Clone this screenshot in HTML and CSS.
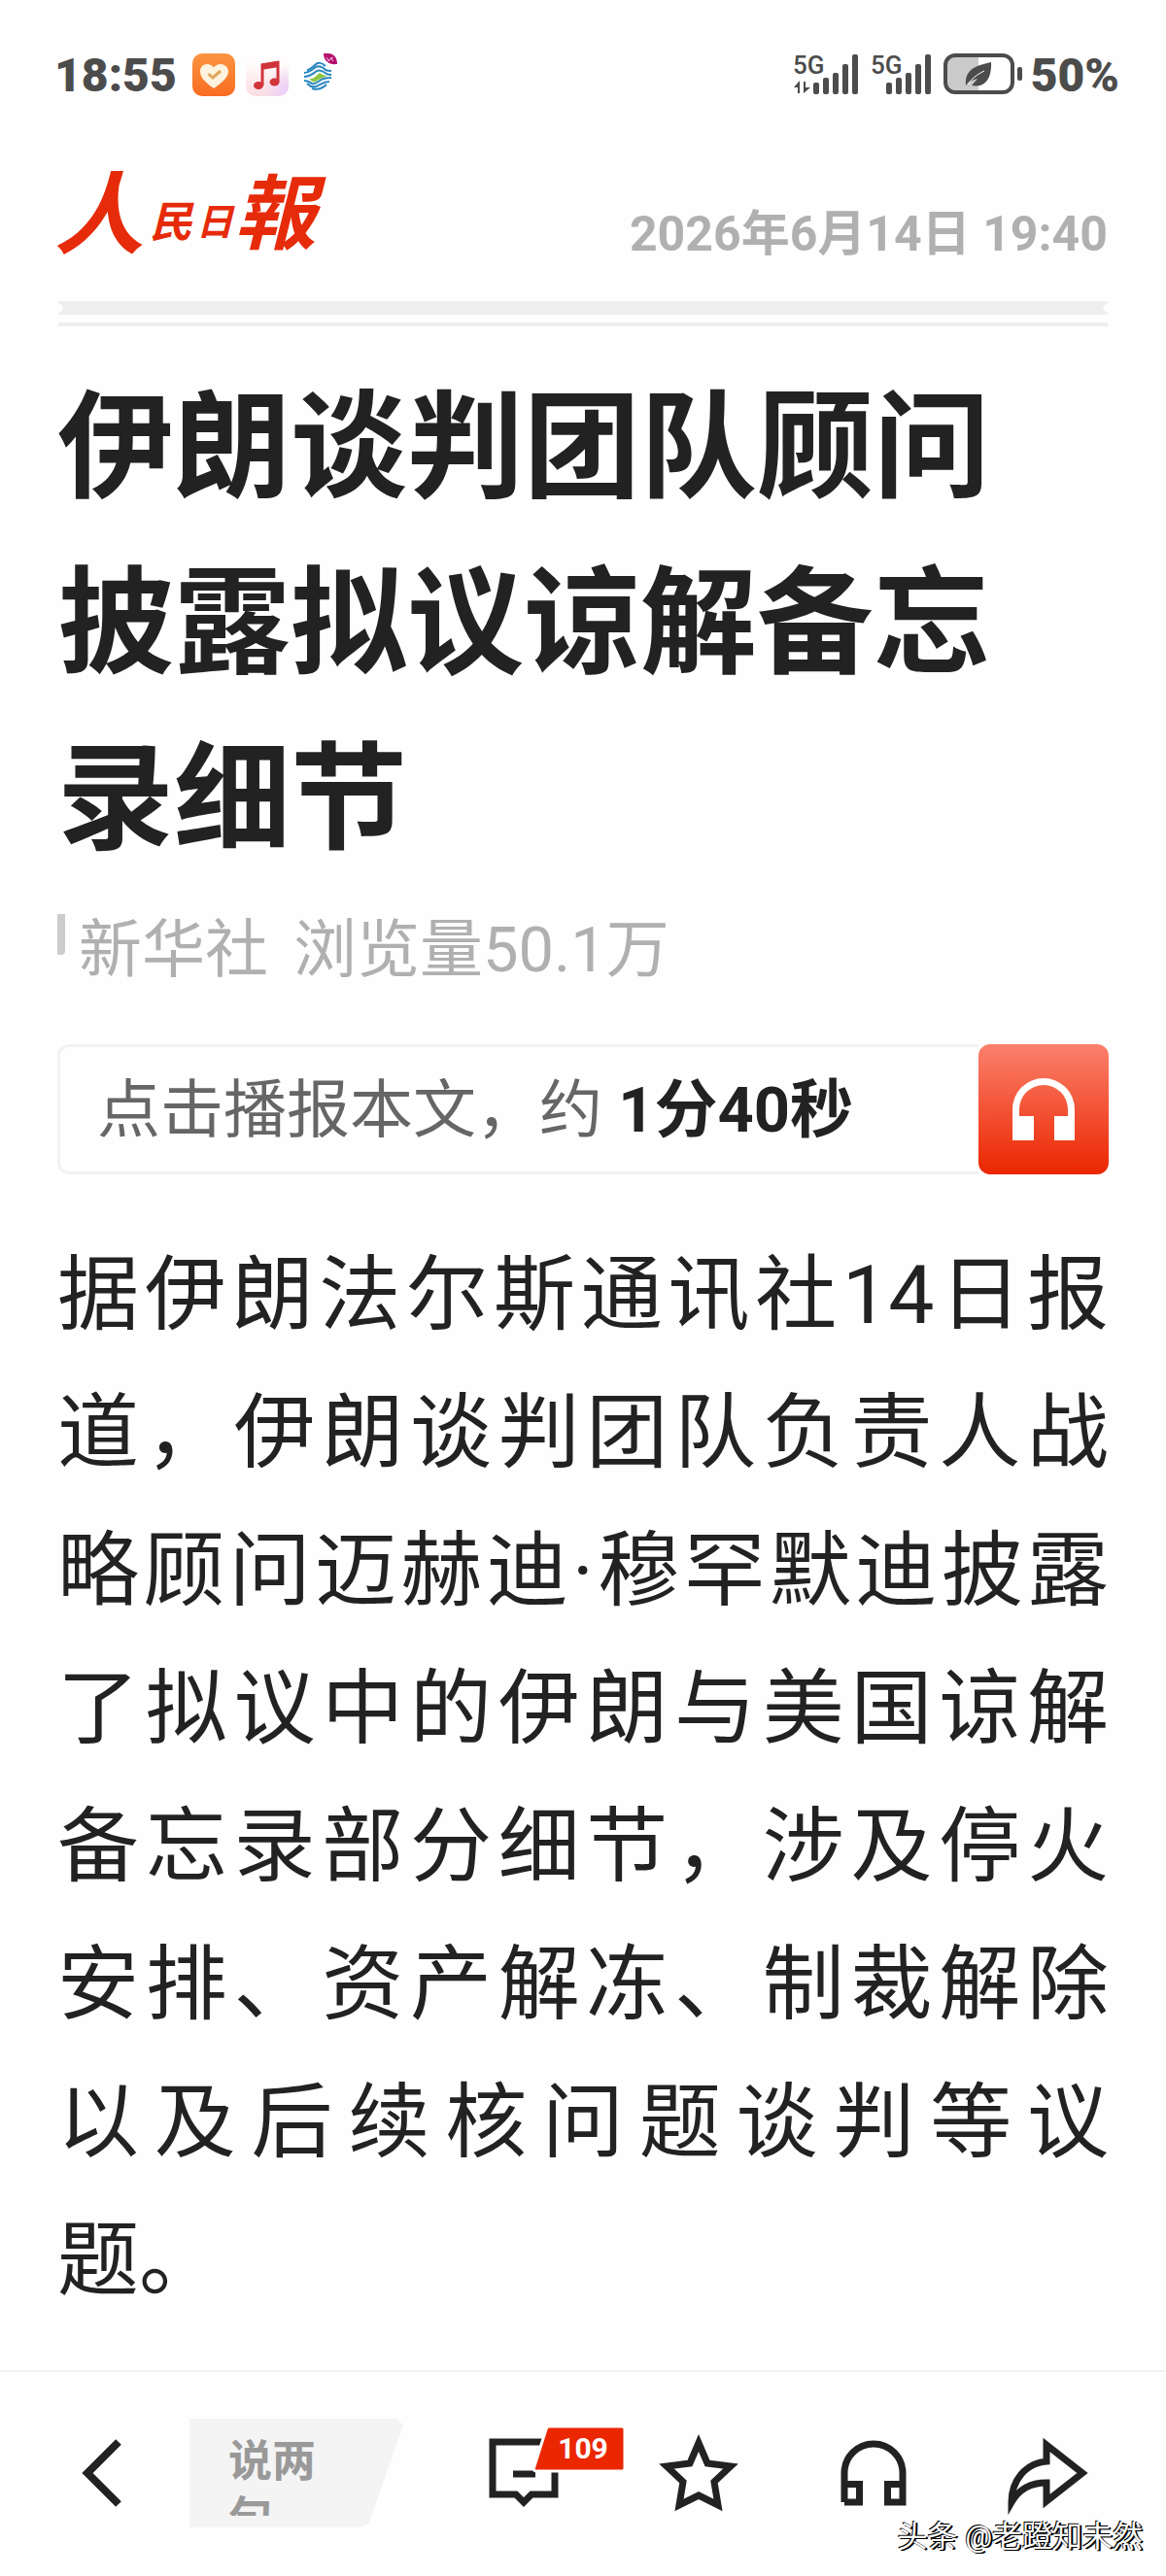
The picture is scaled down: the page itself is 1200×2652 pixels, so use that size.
FILE: index.html
```html
<!DOCTYPE html>
<html lang="zh-CN">
<head>
	<meta charset="utf-8">
	<meta name="viewport" content="width=device-width, initial-scale=1">
	<title>伊朗谈判团队顾问披露拟议谅解备忘录细节</title>
	<link rel="stylesheet" href="styles.css">
</head>
<body>
	<div class="status">
		<span class="time">18:55</span>
		<div class="apps">
			<svg width="44" height="44" viewBox="0 0 44 44">
				<defs>
					<linearGradient id="orange" x1="0" y1="0" x2="0" y2="1">
						<stop offset="0" stop-color="#fb9540"/>
						<stop offset="1" stop-color="#f96c22"/>
					</linearGradient>
				</defs>
				<rect width="44" height="44" rx="10" fill="url(#orange)"/>
				<path d="M22 36C12 29 8 24 8 18.500C8 14 11 11 15 11C18 11 20.500 12.500 22 14.500C23.500 12.500 26 11 29 11C33 11 37 14 37 18.500C37 24 32 29 22 36Z" fill="#fdf3e0"/>
				<path d="M16.500 21L21 25L29 18" fill="none" stroke="#e0a55c" stroke-width="3"/>
			</svg>
			<svg width="44" height="44" viewBox="0 0 44 44">
				<defs>
					<linearGradient id="pink" x1="0" y1="0" x2="0" y2="1">
						<stop offset="0.200" stop-color="#fffdfd"/>
						<stop offset="1" stop-color="#fbdce2"/>
					</linearGradient>
					<radialGradient id="lilac" cx="1" cy="0.900" r="0.600">
						<stop offset="0" stop-color="#e9cdfa"/>
						<stop offset="1" stop-color="#e9cdfa" stop-opacity="0"/>
					</radialGradient>
				</defs>
				<rect width="44" height="44" rx="10" fill="url(#pink)"/>
				<rect width="44" height="44" rx="10" fill="url(#lilac)"/>
				<path d="M17 33V12L33 9.500V29" fill="none" stroke="#d0343a" stroke-width="3"/>
				<path d="M16 10.500L34 7.500V14L16 17Z" fill="#d0343a"/>
				<ellipse cx="13" cy="33" rx="5" ry="4" fill="#d0343a"/>
				<ellipse cx="29.500" cy="29.500" rx="5" ry="4" fill="#d0343a"/>
			</svg>
			<svg width="44" height="44" viewBox="0 0 44 44">
				<g fill="none" stroke="#2a86c0" stroke-width="2">
					<path d="M8 17C11 17 13 15 16 12C19 9 23 9 27 13"/>
					<path d="M5 20C10 20 13 17 17 14C21 12 24 14 27 17C29 18 31 18 33 18"/>
					<path d="M5 24C11 24 14 21 18 18C22 16 25 19 28 21C30 22 31 22 33 22"/>
					<path d="M5 28C9 28 11 30 13 31C16 32 18 30 21 28C25 25 28 25 33 25"/>
					<path d="M8 31C11 34 14 35 17 34C21 33 24 29 31 29"/>
					<path d="M13 36C19 38 24 36 28 32"/>
				</g>
				<path d="M10 26C15 27 17 23 21 20C24 22 26 23 29 23C24 25 21 26 17 29C14 30 12 28 10 26Z" fill="#8cc63f"/>
				<path d="M25 0H30C36 0 39 5 39 11C31 12 25 8 25 0Z" fill="#b5116e"/>
				<path d="M28 4L31 8M32 4L35 8M29 8L35 4" stroke="#f3c3dd" stroke-width="1"/>
			</svg>
		</div>
		<div class="signals">
			<svg width="68" height="44" viewBox="0 0 68 44">
				<text class="net" x="-1" y="21">5G</text>
				<path d="M0 35L6 28V41H4V35ZM10 29V41L17 35H12V29Z" fill="#4c4c4c"/>
				<g fill="#4c4c4c">
					<rect x="20" y="30" width="6" height="12" rx="2"/>
					<rect x="30" y="25" width="6" height="17" rx="2"/>
					<rect x="40" y="20" width="6" height="22" rx="2"/>
					<rect x="50" y="11" width="6" height="31" rx="2"/>
					<rect x="60" y="1" width="6" height="41" rx="2"/>
				</g>
			</svg>
			<svg width="62" height="44" viewBox="0 0 62 44">
				<text class="net" x="-1" y="21">5G</text>
				<g fill="#4c4c4c">
					<rect x="15" y="30" width="6" height="12" rx="2"/>
					<rect x="25" y="25" width="6" height="17" rx="2"/>
					<rect x="35" y="20" width="6" height="22" rx="2"/>
					<rect x="45" y="11" width="6" height="31" rx="2"/>
					<rect x="55" y="1" width="6" height="41" rx="2"/>
				</g>
			</svg>
			<svg width="82" height="44" viewBox="0 0 82 44">
				<path d="M13 3H36V39H13Q3 39 3 30V12Q3 3 13 3Z" fill="#cacaca"/>
				<rect x="2" y="2" width="69" height="38" rx="10" fill="none" stroke="#4c4c4c" stroke-width="4"/>
				<rect x="76" y="14" width="5" height="14" rx="2" fill="#4c4c4c"/>
				<path d="M23 33C22 18 30 13 49 9C50 25 43 36 29 33L35 26C30 27 26 29 23 33Z" fill="#4c4c4c"/>
				<path d="M25 32C29 26 34 22 42 18" fill="none" stroke="#fff" stroke-width="1"/>
			</svg>
		</div>
		<span class="percent">50%</span>
	</div>

	<header class="masthead">
		<svg class="logo" width="270" height="108" viewBox="0 0 270 108" role="img" aria-label="人民日報">
			<text x="-4" y="92" font-size="92">人</text>
			<text x="94" y="82" font-size="44">民</text>
			<text x="142" y="80" font-size="38">日</text>
			<text x="181" y="88" font-size="84">報</text>
		</svg>
		<time class="date" datetime="2026-06-14T19:40">2026年6月14日 19:40</time>
	</header>
	<div class="rule"></div>

	<main class="article">
		<h1>伊朗谈判团队顾问披露拟议谅解备忘录细节</h1>
		<div class="meta">
			<span>新华社</span>
			<span>浏览量50.1万</span>
		</div>
		<div class="listen">
			<div class="listen-text">点击播报本文，约 <strong>1分40秒</strong></div>
			<button class="play" aria-label="播报">
				<svg width="66" height="66" viewBox="0 0 66 66">
					<path d="M1 65V33A32 32 0 0 1 65 33V65H44V40H58V33A25 25 0 0 0 8 33V40H23V65Z" fill="#fff"/>
				</svg>
			</button>
		</div>
		<p class="text">据伊朗法尔斯通讯社14日报道，伊朗谈判团队负责人战略顾问迈赫迪·穆罕默迪披露了拟议中的伊朗与美国谅解备忘录部分细节，涉及停火安排、资产解冻、制裁解除以及后续核问题谈判等议题。</p>
	</main>

	<nav class="toolbar">
		<button aria-label="返回">
			<svg width="44" height="72" viewBox="0 0 44 72">
				<path d="M39 4L7 36L39 68" fill="none" stroke="#222" stroke-width="8"/>
			</svg>
		</button>
		<button class="say"><span>说两句</span></button>
		<button class="comments" aria-label="评论">
			<svg width="72" height="72" viewBox="0 0 72 72">
				<path d="M4 4H68V58H44L36 66L28 58H4Z" fill="none" stroke="#222" stroke-width="7"/>
				<path d="M25 37H48" stroke="#222" stroke-width="7"/>
			</svg>
			<span class="count">
				<svg width="98" height="50" viewBox="0 0 98 50">
					<path d="M18 2H93Q96 2 96 5V45Q96 48 93 48H5Q1 48 3 43L15 5Q16 2 18 2Z" fill="#ea2700" stroke="#fff" stroke-width="3"/>
				</svg>
				<b>109</b>
			</span>
		</button>
		<button aria-label="收藏">
			<svg width="84" height="80" viewBox="0 0 84 80">
				<path d="M42 9L51 30L75 33L58 49L62 73L42 63L22 73L26 49L9 33L33 30Z" fill="none" stroke="#222" stroke-width="7"/>
			</svg>
		</button>
		<button aria-label="听新闻">
			<svg width="68" height="68" viewBox="0 0 68 68">
				<path d="M4 64V34A30 30 0 0 1 64 34V64H48.500V45.500H64M4 45.500H19.500V64H4" fill="none" stroke="#222" stroke-width="7"/>
			</svg>
		</button>
		<button aria-label="分享">
			<svg width="84" height="76" viewBox="0 0 84 76">
				<path d="M40 9L77 38L40 67V48C24 48 12 54 4 68C4 46 18 28 40 26Z" fill="none" stroke="#222" stroke-width="7"/>
			</svg>
		</button>
		<span class="watermark">头条 @老蹬知未然</span>
	</nav>
</body>
</html>
```

FILE: styles.css
```css
* {
	box-sizing: border-box;
}
body {
	margin: 0;
	min-height: 100vh;

	display: flex;
	flex-direction: column;

	font-family: Roboto, "Noto Sans CJK SC", sans-serif;
	background-color: #fefefe;
	color: #222;
}
button {
	padding: 0;
	border: 0;
	background: none;
	font-family: inherit;
	color: inherit;
}
svg {
	display: block;
	overflow: visible;
}

/* phone status bar */
.status {
	display: flex;
	align-items: center;

	height: 154px;
	padding: 0 48px 0 56px;

	font-size: 48px;
	font-weight: 900;
	color: #4c4c4c;
}
.apps {
	display: flex;
	gap: 11px;
	margin-left: 16px;
}
.signals {
	display: flex;
	gap: 12px;
	margin-left: auto;
	margin-right: 8px;
}
.net {
	font-size: 26px;
	font-weight: 500;
	fill: #4c4c4c;
}

.masthead {
	display: flex;
	justify-content: space-between;

	padding: 8px 60px 0;
}
.logo {
	font-family: "Noto Sans CJK TC", sans-serif;
	font-weight: 700;
	font-style: italic;
	fill: #e62b0a;
}
.date {
	padding-top: 51px;

	font-size: 50px;
	line-height: 56px;
	font-weight: 700;
	color: #b0b0b0;
}

/* thick line over a thin one */
.rule {
	height: 26px;
	margin: 40px 60px 0;

	border-bottom: 4px solid #eee;
	background:
		radial-gradient(circle at 100% 7px, #fefefe 4px, transparent 5px),
		radial-gradient(circle at 0 7px, #fefefe 4px, transparent 5px),
		linear-gradient(#eee 14px, transparent 14px);
}

.article {
	padding: 36px 59px 0;
}
h1 {
	max-width: 1000px;
	margin: 0;

	font-size: 120px;
	line-height: 181px;
	font-weight: 700;
}
.meta {
	display: flex;
	gap: 26px;

	margin-top: 24px;
	padding-left: 22px;
	position: relative;

	font-size: 65px;
	line-height: 78px;
	color: #b0b0b0;
}
.meta::before {
	content: "";
	position: absolute;
	left: 0;
	top: 2px;

	width: 8px;
	height: 42px;
	border-radius: 0 0 4px 0;
	background-color: #ccc;
}
.listen {
	display: flex;
	justify-content: space-between;

	margin-top: 58px;
}
.listen-text {
	flex: 1;
	padding: 2px 0 0 38px;

	border: 3px solid #f2f2f2;
	border-right: 0;
	border-radius: 12px 0 0 12px;

	font-size: 65px;
	line-height: 126px;
	color: #666;
}
.listen-text strong {
	color: #222;
}
.play {
	display: flex;
	align-items: center;
	justify-content: center;

	width: 134px;
	height: 134px;

	border-radius: 12px;
	background: linear-gradient(#fb806c, #eb2600);
}
.text {
	margin: 54px 0 0;

	font-size: 84px;
	line-height: 142px;
	text-align: justify;
}

/* bottom toolbar */
.toolbar {
	display: grid;
	grid-template-columns: 180px 254px repeat(4, 1fr);
	align-items: start;

	position: relative;
	height: 212px;
	margin-top: auto;
	padding: 48px 31px 0 15px;

	border-top: 2px solid #f2f2f2;
}
.toolbar button {
	display: flex;
	align-items: center;
	justify-content: center;

	height: 112px;
}
.toolbar .say {
	align-items: flex-start;
	justify-content: flex-start;

	width: 220px;
	padding: 16px 40px 8px;

	background-color: #f4f4f4;
	clip-path: polygon(0 0, 97% 0, 100% 6%, 84% 96%, 80% 100%, 0 100%);

	font-size: 45px;
	line-height: 58px;
	font-weight: 700;
	text-align: left;
	color: #999;
}
.say span {
	width: 100px;
	height: 84px;
	overflow: hidden;
}
.comments {
	position: relative;
}
.count {
	position: absolute;
	left: 98px;
	top: 6px;

	color: #fff;
}
.count b {
	position: absolute;
	left: 8px;
	right: 0;
	top: 0;

	font-size: 30px;
	line-height: 50px;
}
.watermark {
	position: absolute;
	right: 24px;
	bottom: 20px;

	font-size: 31px;
	line-height: 40px;
	color: #fff;
	text-shadow: -1px -1px 0 #000, 1px 1px 0 #000, 2px 1px 0 #000;
}
```
